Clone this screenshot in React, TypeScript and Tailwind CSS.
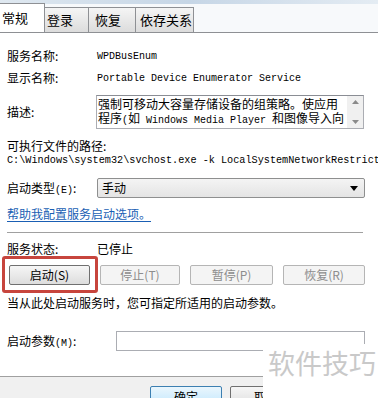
const cjk = '"Noto Sans CJK SC", "Liberation Sans", sans-serif';
const mono = '"Liberation Mono", "Noto Sans CJK SC", monospace';

function Tab({ label, active, className = '' }: { label: string; active?: boolean; className?: string }) {
  if (active) {
    return (
      <div className={`h-[29px] shrink-0 whitespace-nowrap flex items-center bg-white border border-l-0 border-b-0 border-[#8e9094] text-[13px] text-black -mr-px z-10 relative ${className}`}>
        {label}
      </div>
    );
  }
  return (
    <div className={`h-[26px] shrink-0 whitespace-nowrap flex items-center bg-gradient-to-b from-[#f5f5f5] to-[#dcdcdc] border border-[#8e9094] text-[13px] text-black -ml-px ${className}`}>
      {label}
    </div>
  );
}

function Btn({ label, enabled, className = '' }: { label: string; enabled?: boolean; className?: string }) {
  return (
    <div
      className={`h-[20px] flex items-center justify-center rounded-[2px] border text-[12px] ${
        enabled
          ? 'border-[#707070] bg-gradient-to-b from-[#f6f6f6] to-[#dddddd] text-black'
          : 'border-[#b5b5b5] bg-[#f4f4f4] text-[#8d8d8d]'
      } ${className}`}
    >
      {label}
    </div>
  );
}

export default function App() {
  return (
    <div className="w-[378px] h-[398px] overflow-hidden bg-white relative text-black" style={{ fontFamily: cjk }}>
      <div className="h-[4px] bg-gradient-to-r from-[#dfe8f0] via-[#c6d6e6] to-[#e4ecf3]" />
      <div className="h-[29px] flex items-end border-b border-[#8e9094] bg-[#f7f9fb]">
        <Tab label="常规" active className="w-[45px] pl-[2px]" />
        <div className="flex items-end -mb-px">
          <Tab label="登录" className="w-[46px] pl-[3px]" />
          <Tab label="恢复" className="w-[48px] pl-[6px]" />
          <Tab label="依存关系" className="w-[59px] pl-[4px]" />
        </div>
      </div>

      <div className="h-[344px] flex flex-col border-b border-[#a0a0a0] text-[12px]">
        <div className="mt-[13px] h-[20px] flex items-center">
          <span className="w-[97px] pl-[7px]">服务名称:</span>
          <span className="text-[10px]" style={{ fontFamily: mono }}>WPDBusEnum</span>
        </div>
        <div className="mt-[2px] h-[20px] flex items-center">
          <span className="w-[97px] pl-[7px]">显示名称:</span>
          <span className="text-[10px]" style={{ fontFamily: mono }}>Portable Device Enumerator Service</span>
        </div>
        <div className="mt-[7px] h-[34px] flex items-center">
          <span className="w-[96px] pl-[7px]">描述:</span>
          <div className="w-[268px] h-[34px] border border-[#abadb3] border-t-[#8a8d94] flex">
            <div className="flex-1 pl-[1px] pt-[1px] leading-[14px] whitespace-nowrap overflow-hidden">
              <div>强制可移动大容量存储设备的组策略。使应用</div>
              <div>
                程序<span className="text-[10px]" style={{ fontFamily: mono }}>(</span>如
                <span className="text-[10px]" style={{ fontFamily: mono }}> Windows Media Player </span>和图像导入向
              </div>
            </div>
            <div className="w-[16px] bg-[#f0f0f0] flex flex-col items-center justify-between py-[4px]">
              <svg width="7" height="4" viewBox="0 0 7 4"><path d="M0 4L3.5 0L7 4Z" fill="#8a8a8a" /></svg>
              <svg width="7" height="4" viewBox="0 0 7 4"><path d="M0 0L3.5 4L7 0Z" fill="#8a8a8a" /></svg>
            </div>
          </div>
        </div>
        <div className="mt-[8px] h-[18px] flex items-center pl-[7px]">可执行文件的路径:</div>
        <div className="h-[12px] flex items-center pl-[7px] text-[10.2px] whitespace-nowrap" style={{ fontFamily: mono }}>
          C:\Windows\system32\svchost.exe -k LocalSystemNetworkRestricted
        </div>
        <div className="mt-[11px] h-[20px] flex items-center">
          <span className="w-[97px] pl-[7px]">
            启动类型<span className="text-[10px]" style={{ fontFamily: mono }}>(E)</span>:
          </span>
          <div className="w-[268px] h-[20px] rounded-[2px] border border-[#8e8f8f] bg-gradient-to-b from-[#f4f4f4] to-[#e4e4e4] flex items-center justify-between pl-[4px] pr-[6px]">
            <span>手动</span>
            <svg width="8" height="5" viewBox="0 0 8 5"><path d="M0 0L4 5L8 0Z" fill="#000" /></svg>
          </div>
        </div>
        <div className="mt-[8px] h-[16px] flex items-center pl-[7px]">
          <span className="text-[#1a5fb4] underline underline-offset-2">帮助我配置服务启动选项。</span>
        </div>
        <div className="mt-[10px] ml-[7px] w-[356px] h-px bg-[#a0a0a0]" />
        <div className="mt-[8px] h-[16px] flex items-center">
          <span className="w-[97px] pl-[7px]">服务状态:</span>
          <span>已停止</span>
        </div>
        <div className="mt-[8px] h-[20px] flex items-center pl-[9px] gap-[10px]">
          <div className="relative">
            <Btn label="启动(S)" enabled className="w-[81px]" />
            <div className="absolute -left-[7px] -right-[8px] -top-[9px] -bottom-[8px] border-[3px] border-[#c7453d] rounded-[3px]" />
          </div>
          <Btn label="停止(T)" className="w-[80px]" />
          <Btn label="暂停(P)" className="w-[83px]" />
          <Btn label="恢复(R)" className="w-[82px]" />
        </div>
        <div className="mt-[10px] h-[16px] flex items-center pl-[7px]">
          当从此处启动服务时，您可指定所适用的启动参数。
        </div>
        <div className="mt-[20px] h-[20px] flex items-center">
          <span className="w-[116px] pl-[7px]">
            启动参数<span className="text-[10px]" style={{ fontFamily: mono }}>(M)</span>:
          </span>
          <div className="w-[249px] h-[20px] border border-[#abadb3] bg-white" />
        </div>
      </div>

      <div className="h-[21px] bg-[#f0f0f0] flex items-start pt-[9px] pl-[150px] gap-[8px] text-[12px]">
        <div className="w-[72px] h-[22px] rounded-[2px] border border-[#3c7fb1] bg-gradient-to-b from-[#eaf6fd] to-[#bee6fd] flex justify-center pt-[1px]">确定</div>
        <div className="w-[72px] h-[22px] rounded-[2px] border border-[#707070] bg-gradient-to-b from-[#f6f6f6] to-[#dddddd] flex justify-center pt-[1px]">取消</div>
      </div>

      <div className="absolute left-[263px] top-[344px] w-[115px] h-[54px] bg-white flex items-start pt-[2px] pl-[5px]">
        <span className="text-[27px] leading-[34px] text-[#c9c9c9]">软件技巧</span>
      </div>
    </div>
  );
}
